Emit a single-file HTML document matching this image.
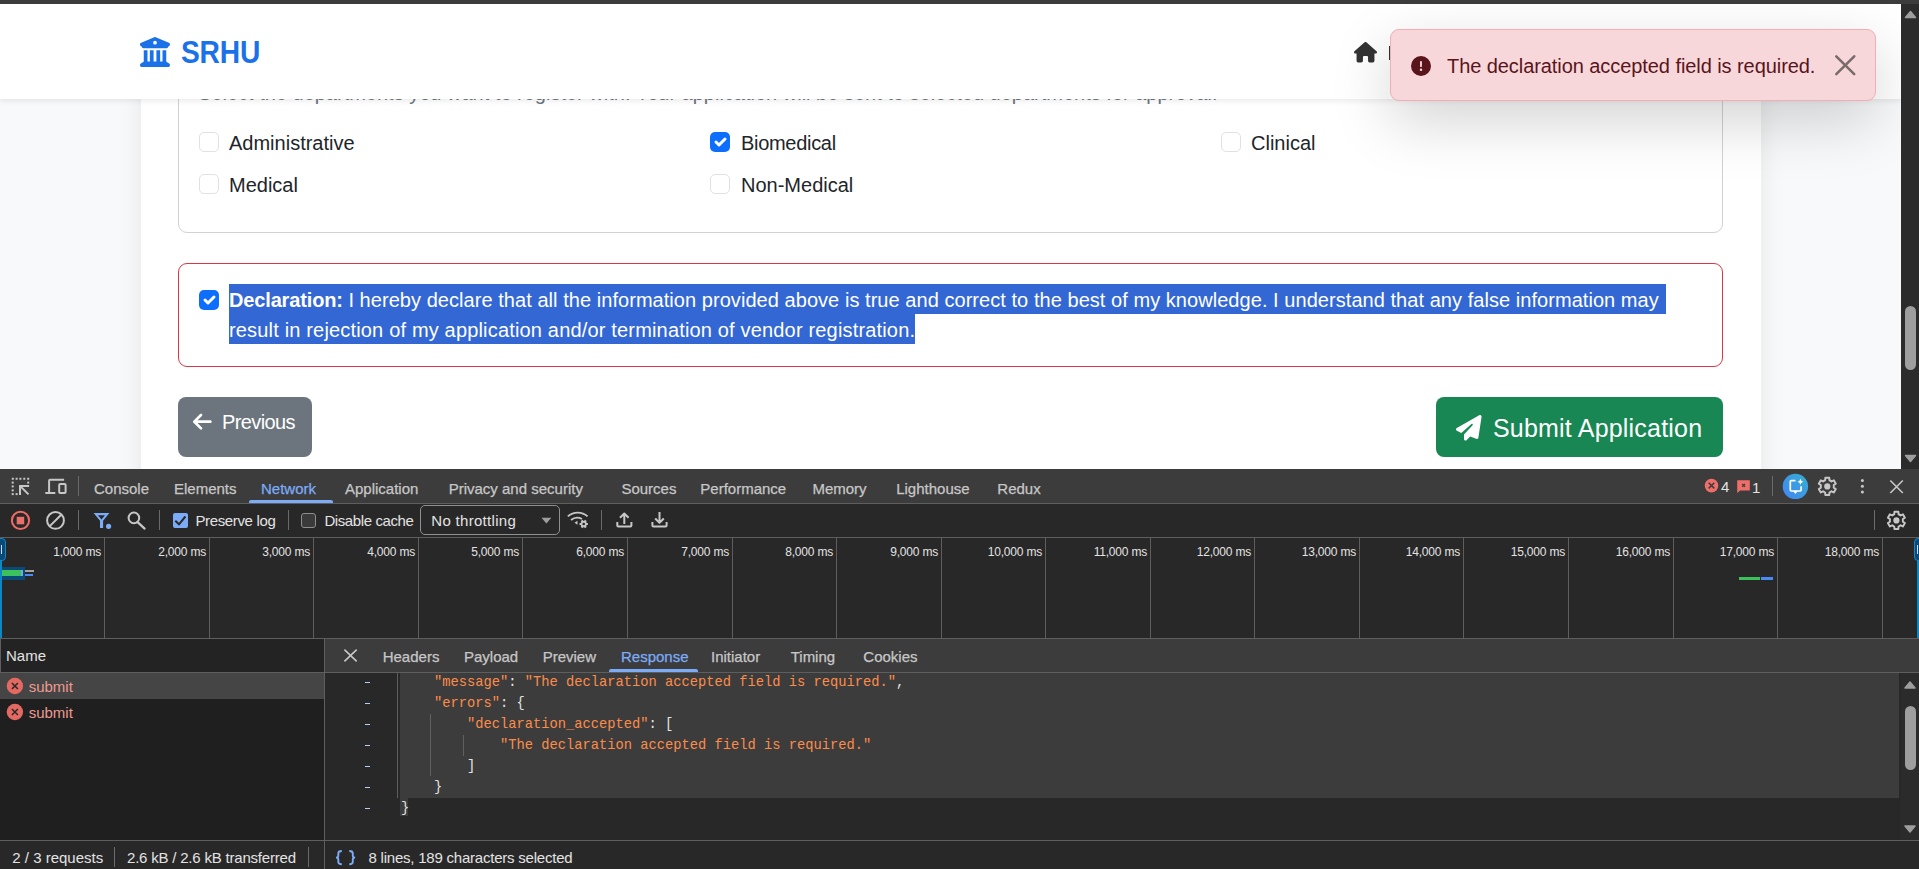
<!DOCTYPE html>
<html><head><meta charset="utf-8">
<style>
*{box-sizing:border-box;margin:0;padding:0}
html,body{width:1919px;height:869px;overflow:hidden;background:#f8f9fa;font-family:"Liberation Sans",sans-serif;position:relative}
.a{position:absolute}
.t{position:absolute;white-space:pre}
svg{position:absolute;overflow:visible}
.box{position:absolute;border:1px solid #d2d2d2;border-radius:9px}
.cb{position:absolute;width:20px;height:20px;border:1px solid #dee2e6;border-radius:5px;background:#fff}
.cbon{position:absolute;width:20px;height:20px;border-radius:5px;background:#0d6efd}
.lbl{position:absolute;white-space:pre;font-size:20px;line-height:20px;color:#212529}
.d{position:absolute;white-space:pre;font-size:15px;line-height:15px;color:#c7c7c7}
.tl{position:absolute;white-space:pre;font-size:12px;line-height:12px;color:#e3e3e3;text-align:right;width:80px}
.gl{position:absolute;top:538px;width:1px;height:100px;background:#5c5c5c}
.code{position:absolute;white-space:pre;font-family:"Liberation Mono",monospace;font-size:13.75px;line-height:13.75px;color:#fc8c4a}
.p{color:#e3e3e3}
.dash{position:absolute;left:365px;width:5px;height:1px;background:#a8c7fa}
</style></head><body>
<!-- ============ PAGE ============ -->
<div class="a" id="page" style="left:0;top:0;width:1901px;height:469px;background:#f8f9fa;overflow:hidden">
  <div class="a" style="left:141px;top:-20px;width:1620px;height:600px;background:#fff;box-shadow:0 10px 24px rgba(0,0,0,.08)"></div>
  <!-- departments box -->
  <div class="box" style="left:178px;top:40px;width:1545px;height:193px"></div>
  <div class="t" style="left:198px;top:83px;font-size:20px;line-height:20px;color:#6c757d">Select the departments you want to register with. Your application will be sent to selected departments for approval.</div>
  <div class="cb" style="left:199px;top:132px"></div>
  <div class="lbl" style="left:229px;top:133px">Administrative</div>
  <div class="cbon" style="left:710px;top:132px"><svg width="20" height="20" viewBox="0 0 20 20" style="left:0;top:0"><path d="M6 10l3 3l6-6" fill="none" stroke="#fff" stroke-width="3" stroke-linecap="round" stroke-linejoin="round"/></svg></div>
  <div class="lbl" style="left:741px;top:133px;letter-spacing:-0.3px">Biomedical</div>
  <div class="cb" style="left:1221px;top:132px"></div>
  <div class="lbl" style="left:1251px;top:133px">Clinical</div>
  <div class="cb" style="left:199px;top:174px"></div>
  <div class="lbl" style="left:229px;top:175px">Medical</div>
  <div class="cb" style="left:710px;top:174px"></div>
  <div class="lbl" style="left:741px;top:175px">Non-Medical</div>
  <!-- declaration -->
  <div class="box" style="left:178px;top:263px;width:1545px;height:104px;border-color:#dc3545"></div>
  <div class="a" style="left:229px;top:284px;width:1437px;height:30px;background:#3367d4"></div>
  <div class="a" style="left:229px;top:314px;width:686px;height:30px;background:#3367d4"></div>
  <div class="cbon" style="left:199px;top:290px"><svg width="20" height="20" viewBox="0 0 20 20" style="left:0;top:0"><path d="M6 10l3 3l6-6" fill="none" stroke="#fff" stroke-width="3" stroke-linecap="round" stroke-linejoin="round"/></svg></div>
  <div class="t" style="left:229px;top:290px;font-size:20px;line-height:20px;color:#fff"><b style="letter-spacing:-0.15px">Declaration:</b><span style="letter-spacing:0.05px"> I hereby declare that all the information provided above is true and correct to the best of my knowledge. I understand that any false information may</span></div>
  <div class="t" style="left:229px;top:320px;font-size:20px;line-height:20px;color:#fff;letter-spacing:0.17px">result in rejection of my application and/or termination of vendor registration.</div>
  <!-- buttons -->
  <div class="a" style="left:178px;top:397px;width:134px;height:60px;background:#6c757d;border-radius:8px"></div>
  <svg width="448" height="512" viewBox="0 0 448 512" style="left:193px;top:411px;width:18.7px;height:21.4px"><path fill="#fff" d="M9.4 233.4c-12.5 12.5-12.5 32.8 0 45.3l160 160c12.5 12.5 32.8 12.5 45.3 0s12.5-32.8 0-45.3L109.2 288 416 288c17.7 0 32-14.3 32-32s-14.3-32-32-32l-306.7 0L214.6 118.6c12.5-12.5 12.5-32.8 0-45.3s-32.8-12.5-45.3 0l-160 160z"/></svg>
  <div class="t" style="left:222px;top:412px;font-size:20px;line-height:20px;color:#fff;letter-spacing:-0.6px">Previous</div>
  <div class="a" style="left:1436px;top:397px;width:287px;height:60px;background:#198754;border-radius:8px"></div>
  <svg width="512" height="512" viewBox="0 0 512 512" style="left:1456px;top:415px;width:25.6px;height:25.6px"><path fill="#fff" d="M498.1 5.6c10.1 7 15.4 19.1 13.5 31.2l-64 416c-1.5 9.7-7.4 18.2-16 23s-18.9 5.4-28 1.6L284 427.7l-68.5 74.1c-8.9 9.7-22.9 12.9-35.2 8.1S160 493.2 160 480V396.4c0-4 1.5-7.8 4.2-10.7L331.8 202.8c5.8-6.3 5.6-16-.4-22s-15.7-6.4-22-.7L106 360.8 17.7 316.6C7.1 311.3 .3 300.7 0 288.9s5.900-22.8 16.1-28.7l448-256c10.7-6.1 23.9-5.5 34 1.4z"/></svg>
  <div class="t" style="left:1493px;top:416px;font-size:25px;line-height:25px;color:#fff;letter-spacing:0.2px">Submit Application</div>
  <!-- navbar -->
  <div class="a" style="left:0;top:0;width:1901px;height:99px;background:#fff;box-shadow:0 2.5px 5px rgba(0,0,0,.075)"></div>
  <svg width="512" height="512" viewBox="0 0 512 512" style="left:140px;top:36.7px;width:30px;height:30px"><path fill="#1b72e8" d="M243.4 2.6l-224 96c-14 6-21.8 21-18.7 35.8S16.8 160 32 160v8c0 13.3 10.7 24 24 24H456c13.3 0 24-10.7 24-24v-8c15.2 0 28.3-10.7 31.3-25.6s-4.8-29.9-18.7-35.8l-224-96c-8-3.4-17.2-3.4-25.2 0zM128 224H64V420.300c-.6 .3-1.2 .7-1.8 1.1l-48 32c-11.7 7.8-17 22.400-12.9 35.900S17.900 512 32 512H480c14.100 0 26.500-9.200 30.600-22.700s-1.100-28.100-12.900-35.900l-48-32c-.6-.4-1.200-.7-1.800-1.100V224H384V416H344V224H280V416H232V224H168V416H128V224zM256 64a32 32 0 1 1 0 64 32 32 0 1 1 0-64z"/></svg>
  <div class="t" style="left:181.3px;top:37.6px;font-size:30.8px;line-height:30.8px;font-weight:bold;color:#1b72e8;letter-spacing:-0.2px;transform:scaleX(0.915);transform-origin:0 0">SRHU</div>
  <svg width="576" height="512" viewBox="0 0 576 512" style="left:1354.3px;top:42.4px;width:23px;height:20.45px"><path fill="#333" d="M575.8 255.5c0 18-15 32.1-32 32.1h-32l.7 160.2c0 2.7-.2 5.4-.5 8.1V472c0 22.1-17.9 40-40 40H456c-1.1 0-2.2 0-3.3-.1c-1.4 .1-2.8 .1-4.2 .1H416 392c-22.1 0-40-17.9-40-40V448 384c0-17.700-14.300-32-32-32H256c-17.700 0-32 14.300-32 32v64 24c0 22.100-17.900 40-40 40H160 128.100c-1.500 0-3-.1-4.500-.2c-1.200 .1-2.400 .2-3.600 .2H104c-22.100 0-40-17.900-40-40V360c0-.9 0-1.900 .1-2.800V287.600H32c-18 0-32-14-32-32.100c0-9 3-17 10-24L266.400 8c7-7 15-8 22-8s15 2 21 7L564.800 231.500c8 7 12 15 11 24z"/></svg>
  <div class="a" style="left:1388.8px;top:46px;width:2px;height:14px;background:#333"></div>
  <!-- toast -->
  <div class="a" style="left:1390px;top:29px;width:486px;height:72px;background:#f8d7da;border:1px solid #f1aeb5;border-radius:9px;box-shadow:0 20px 60px rgba(0,0,0,.175)"></div>
  <svg width="512" height="512" viewBox="0 0 512 512" style="left:1411.3px;top:55.6px;width:20px;height:20px"><path fill="#58151c" d="M256 512A256 256 0 1 0 256 0a256 256 0 1 0 0 512zm0-384c13.3 0 24 10.7 24 24V264c0 13.3-10.7 24-24 24s-24-10.7-24-24V152c0-13.3 10.7-24 24-24zM224 352a32 32 0 1 1 64 0 32 32 0 1 1 -64 0z"/></svg>
  <div class="t" style="left:1447px;top:56px;font-size:20px;line-height:20px;color:#58151c;letter-spacing:-0.07px">The declaration accepted field is required.</div>
  <svg width="16" height="16" viewBox="0 0 16 16" style="left:1835px;top:55px;width:20.5px;height:20.5px"><path fill="#7a6a6c" d="M.293.293a1 1 0 0 1 1.414 0L8 6.586 14.293.293a1 1 0 1 1 1.414 1.414L9.414 8l6.293 6.293a1 1 0 0 1-1.414 1.414L8 9.414l-6.293 6.293a1 1 0 0 1-1.414-1.414L6.586 8 .293 1.707a1 1 0 0 1 0-1.414"/></svg>
</div>
<div class="a" style="left:0;top:0;width:1919px;height:4px;background:#3c3c3c"></div>
<!-- page scrollbar -->
<div class="a" style="left:1901px;top:4px;width:18px;height:465px;background:#2b2b2b"></div>
<svg width="19" height="12" style="left:1901px;top:8px"><path d="M4.5 9.5 L9.5 3.5 L14.5 9.5 Z" fill="#9e9e9e" stroke="#9e9e9e" stroke-width="1.5" stroke-linejoin="round"/></svg>
<svg width="19" height="12" style="left:1901px;top:453px"><path d="M4.5 2.5 L9.5 8.5 L14.5 2.5 Z" fill="#9e9e9e" stroke="#9e9e9e" stroke-width="1.5" stroke-linejoin="round"/></svg>
<div class="a" style="left:1905px;top:306px;width:11px;height:64px;background:#9e9e9e;border-radius:6px"></div>

<!-- ============ DEVTOOLS ============ -->
<div class="a" style="left:0px;top:469px;width:1919px;height:400px;background:#282828;"></div>
<div class="a" style="left:0px;top:469px;width:1919px;height:34px;background:#3c3c3c;"></div>
<div class="a" style="left:0px;top:503px;width:1919px;height:1px;background:#5e5e5e;"></div>
<div class="a" style="left:0px;top:537px;width:1919px;height:1px;background:#5e5e5e;"></div>
<div class="a" style="left:78px;top:476px;width:1px;height:20px;background:#6a6a6a;"></div>
<div class="a" style="left:1772px;top:476px;width:1px;height:20px;background:#6a6a6a;"></div>
<div class="a" style="left:78px;top:510px;width:1px;height:20px;background:#6a6a6a;"></div>
<div class="a" style="left:159px;top:510px;width:1px;height:20px;background:#6a6a6a;"></div>
<div class="a" style="left:288px;top:510px;width:1px;height:20px;background:#6a6a6a;"></div>
<div class="a" style="left:601px;top:510px;width:1px;height:20px;background:#6a6a6a;"></div>
<div class="a" style="left:1874px;top:510px;width:1px;height:20px;background:#6a6a6a;"></div>
<div class="t" style="left:94px;top:481px;font-size:15px;line-height:15px;color:#c7c7c7;-webkit-text-stroke:0.25px #c7c7c7">Console</div>
<div class="t" style="left:174px;top:481px;font-size:15px;line-height:15px;color:#c7c7c7;-webkit-text-stroke:0.25px #c7c7c7">Elements</div>
<div class="t" style="left:261px;top:481px;font-size:15px;line-height:15px;color:#7cacf8;-webkit-text-stroke:0.25px #7cacf8">Network</div>
<div class="t" style="left:345px;top:481px;font-size:15px;line-height:15px;color:#c7c7c7;-webkit-text-stroke:0.25px #c7c7c7">Application</div>
<div class="t" style="left:448.7px;top:481px;font-size:15px;line-height:15px;color:#c7c7c7;-webkit-text-stroke:0.25px #c7c7c7">Privacy and security</div>
<div class="t" style="left:621.4px;top:481px;font-size:15px;line-height:15px;color:#c7c7c7;-webkit-text-stroke:0.25px #c7c7c7">Sources</div>
<div class="t" style="left:700.3px;top:481px;font-size:15px;line-height:15px;color:#c7c7c7;-webkit-text-stroke:0.25px #c7c7c7">Performance</div>
<div class="t" style="left:812.4px;top:481px;font-size:15px;line-height:15px;color:#c7c7c7;-webkit-text-stroke:0.25px #c7c7c7">Memory</div>
<div class="t" style="left:896.2px;top:481px;font-size:15px;line-height:15px;color:#c7c7c7;-webkit-text-stroke:0.25px #c7c7c7">Lighthouse</div>
<div class="t" style="left:997.3px;top:481px;font-size:15px;line-height:15px;color:#c7c7c7;-webkit-text-stroke:0.25px #c7c7c7">Redux</div>
<div class="a" style="left:248.5px;top:500px;width:84px;height:3px;background:#7cacf8;border-radius:2px 2px 0 0"></div>
<div class="t" style="left:1721px;top:479px;font-size:15px;line-height:15px;color:#e3e3e3;">4</div>
<div class="t" style="left:1752px;top:480px;font-size:15px;line-height:15px;color:#e3e3e3;">1</div>
<div class="t" style="left:195.4px;top:513px;font-size:15px;line-height:15px;color:#e3e3e3;letter-spacing:-0.35px">Preserve log</div>
<div class="t" style="left:324.4px;top:513px;font-size:15px;line-height:15px;color:#e3e3e3;letter-spacing:-0.4px">Disable cache</div>
<div class="a" style="left:420px;top:505px;width:140px;height:30px;border:1px solid #8e918f;border-radius:5px"></div>
<div class="t" style="left:431.3px;top:513px;font-size:15px;line-height:15px;color:#e3e3e3;letter-spacing:0.3px">No throttling</div>
<div class="a" style="left:173px;top:513px;width:15px;height:15px;background:#7cacf8;border-radius:2px"></div>
<div class="a" style="left:301px;top:513px;width:15px;height:15px;border:1.5px solid #8e8e8e;border-radius:3px;background:#3a3a3a"></div>
<div class="a" style="left:104px;top:538px;width:1px;height:100px;background:#5e5e5e;"></div>
<div class="t" style="left:1px;top:546px;width:100px;text-align:right;font-size:12px;line-height:12px;color:#e3e3e3;letter-spacing:-0.2px">1,000 ms</div>
<div class="a" style="left:209px;top:538px;width:1px;height:100px;background:#5e5e5e;"></div>
<div class="t" style="left:106px;top:546px;width:100px;text-align:right;font-size:12px;line-height:12px;color:#e3e3e3;letter-spacing:-0.2px">2,000 ms</div>
<div class="a" style="left:313px;top:538px;width:1px;height:100px;background:#5e5e5e;"></div>
<div class="t" style="left:210px;top:546px;width:100px;text-align:right;font-size:12px;line-height:12px;color:#e3e3e3;letter-spacing:-0.2px">3,000 ms</div>
<div class="a" style="left:418px;top:538px;width:1px;height:100px;background:#5e5e5e;"></div>
<div class="t" style="left:315px;top:546px;width:100px;text-align:right;font-size:12px;line-height:12px;color:#e3e3e3;letter-spacing:-0.2px">4,000 ms</div>
<div class="a" style="left:522px;top:538px;width:1px;height:100px;background:#5e5e5e;"></div>
<div class="t" style="left:419px;top:546px;width:100px;text-align:right;font-size:12px;line-height:12px;color:#e3e3e3;letter-spacing:-0.2px">5,000 ms</div>
<div class="a" style="left:627px;top:538px;width:1px;height:100px;background:#5e5e5e;"></div>
<div class="t" style="left:524px;top:546px;width:100px;text-align:right;font-size:12px;line-height:12px;color:#e3e3e3;letter-spacing:-0.2px">6,000 ms</div>
<div class="a" style="left:732px;top:538px;width:1px;height:100px;background:#5e5e5e;"></div>
<div class="t" style="left:629px;top:546px;width:100px;text-align:right;font-size:12px;line-height:12px;color:#e3e3e3;letter-spacing:-0.2px">7,000 ms</div>
<div class="a" style="left:836px;top:538px;width:1px;height:100px;background:#5e5e5e;"></div>
<div class="t" style="left:733px;top:546px;width:100px;text-align:right;font-size:12px;line-height:12px;color:#e3e3e3;letter-spacing:-0.2px">8,000 ms</div>
<div class="a" style="left:941px;top:538px;width:1px;height:100px;background:#5e5e5e;"></div>
<div class="t" style="left:838px;top:546px;width:100px;text-align:right;font-size:12px;line-height:12px;color:#e3e3e3;letter-spacing:-0.2px">9,000 ms</div>
<div class="a" style="left:1045px;top:538px;width:1px;height:100px;background:#5e5e5e;"></div>
<div class="t" style="left:942px;top:546px;width:100px;text-align:right;font-size:12px;line-height:12px;color:#e3e3e3;letter-spacing:-0.2px">10,000 ms</div>
<div class="a" style="left:1150px;top:538px;width:1px;height:100px;background:#5e5e5e;"></div>
<div class="t" style="left:1047px;top:546px;width:100px;text-align:right;font-size:12px;line-height:12px;color:#e3e3e3;letter-spacing:-0.2px">11,000 ms</div>
<div class="a" style="left:1254px;top:538px;width:1px;height:100px;background:#5e5e5e;"></div>
<div class="t" style="left:1151px;top:546px;width:100px;text-align:right;font-size:12px;line-height:12px;color:#e3e3e3;letter-spacing:-0.2px">12,000 ms</div>
<div class="a" style="left:1359px;top:538px;width:1px;height:100px;background:#5e5e5e;"></div>
<div class="t" style="left:1256px;top:546px;width:100px;text-align:right;font-size:12px;line-height:12px;color:#e3e3e3;letter-spacing:-0.2px">13,000 ms</div>
<div class="a" style="left:1463px;top:538px;width:1px;height:100px;background:#5e5e5e;"></div>
<div class="t" style="left:1360px;top:546px;width:100px;text-align:right;font-size:12px;line-height:12px;color:#e3e3e3;letter-spacing:-0.2px">14,000 ms</div>
<div class="a" style="left:1568px;top:538px;width:1px;height:100px;background:#5e5e5e;"></div>
<div class="t" style="left:1465px;top:546px;width:100px;text-align:right;font-size:12px;line-height:12px;color:#e3e3e3;letter-spacing:-0.2px">15,000 ms</div>
<div class="a" style="left:1673px;top:538px;width:1px;height:100px;background:#5e5e5e;"></div>
<div class="t" style="left:1570px;top:546px;width:100px;text-align:right;font-size:12px;line-height:12px;color:#e3e3e3;letter-spacing:-0.2px">16,000 ms</div>
<div class="a" style="left:1777px;top:538px;width:1px;height:100px;background:#5e5e5e;"></div>
<div class="t" style="left:1674px;top:546px;width:100px;text-align:right;font-size:12px;line-height:12px;color:#e3e3e3;letter-spacing:-0.2px">17,000 ms</div>
<div class="a" style="left:1882px;top:538px;width:1px;height:100px;background:#5e5e5e;"></div>
<div class="t" style="left:1779px;top:546px;width:100px;text-align:right;font-size:12px;line-height:12px;color:#e3e3e3;letter-spacing:-0.2px">18,000 ms</div>
<div class="a" style="left:0px;top:638px;width:1919px;height:1px;background:#5e5e5e;"></div>
<div class="a" style="left:0px;top:560px;width:2px;height:78px;background:#0b87c6;"></div>
<div class="a" style="left:-3px;top:538px;width:9px;height:23px;background:#0b4a76;border:1.5px solid #1586c4;border-radius:4px"></div>
<div class="a" style="left:1px;top:545px;width:1px;height:9px;background:#c6dafc;"></div>
<div class="a" style="left:2px;top:567px;width:23px;height:13px;background:#0b4a76;"></div>
<div class="a" style="left:2px;top:570px;width:19px;height:6px;background:#3cc25d;"></div>
<div class="a" style="left:21px;top:570px;width:2px;height:6px;background:#76a6e8;"></div>
<div class="a" style="left:25px;top:570px;width:9px;height:2px;background:#a3a3a3;"></div>
<div class="a" style="left:25px;top:573.5px;width:8px;height:2.5px;background:#4a8af4;"></div>
<div class="a" style="left:1739px;top:577px;width:21px;height:3px;background:#3cc25d;"></div>
<div class="a" style="left:1761px;top:577px;width:12px;height:3px;background:#4a8af4;"></div>
<div class="a" style="left:1914px;top:538px;width:9px;height:23px;background:#0b4a76;border:1.5px solid #1586c4;border-radius:4px"></div>
<div class="a" style="left:1917px;top:560px;width:2px;height:78px;background:#0b87c6;"></div>
<div class="a" style="left:1917px;top:545px;width:1px;height:9px;background:#c6dafc;"></div>
<div class="a" style="left:0px;top:639px;width:324px;height:202px;background:#1f1f1f;"></div>
<div class="a" style="left:0px;top:639px;width:324px;height:33px;background:#232323;"></div>
<div class="a" style="left:0px;top:639px;width:1px;height:33px;background:#5e5e5e;"></div>
<div class="a" style="left:0px;top:672px;width:324px;height:1px;background:#5e5e5e;"></div>
<div class="t" style="left:6px;top:648px;font-size:15px;line-height:15px;color:#e3e3e3;">Name</div>
<div class="a" style="left:0px;top:673px;width:324px;height:26px;background:#454545;"></div>
<div class="t" style="left:28.7px;top:679px;font-size:15px;line-height:15px;color:#ec9a90;">submit</div>
<div class="t" style="left:28.7px;top:705px;font-size:15px;line-height:15px;color:#ec9a90;">submit</div>
<div class="a" style="left:324px;top:639px;width:1px;height:230px;background:#5e5e5e;"></div>
<div class="a" style="left:325px;top:639px;width:1594px;height:33px;background:#3c3c3c;"></div>
<div class="a" style="left:325px;top:672px;width:1594px;height:1px;background:#5e5e5e;"></div>
<div class="t" style="left:382.7px;top:649px;font-size:15px;line-height:15px;color:#c7c7c7;-webkit-text-stroke:0.25px #c7c7c7">Headers</div>
<div class="t" style="left:464px;top:649px;font-size:15px;line-height:15px;color:#c7c7c7;-webkit-text-stroke:0.25px #c7c7c7">Payload</div>
<div class="t" style="left:542.7px;top:649px;font-size:15px;line-height:15px;color:#c7c7c7;-webkit-text-stroke:0.25px #c7c7c7">Preview</div>
<div class="t" style="left:621px;top:649px;font-size:15px;line-height:15px;color:#7cacf8;-webkit-text-stroke:0.25px #7cacf8">Response</div>
<div class="t" style="left:711px;top:649px;font-size:15px;line-height:15px;color:#c7c7c7;-webkit-text-stroke:0.25px #c7c7c7">Initiator</div>
<div class="t" style="left:790.7px;top:649px;font-size:15px;line-height:15px;color:#c7c7c7;-webkit-text-stroke:0.25px #c7c7c7">Timing</div>
<div class="t" style="left:863.3px;top:649px;font-size:15px;line-height:15px;color:#c7c7c7;-webkit-text-stroke:0.25px #c7c7c7">Cookies</div>
<div class="a" style="left:608.7px;top:669px;width:89.6px;height:3px;background:#7cacf8;border-radius:2px 2px 0 0"></div>
<div class="a" style="left:325px;top:673px;width:1576px;height:168px;background:#282828;"></div>
<div class="a" style="left:397px;top:673px;width:1px;height:125px;background:#5e5e5e;"></div>
<div class="a" style="left:400px;top:673px;width:1499px;height:125px;background:#3c3c3c;"></div>
<div class="a" style="left:400px;top:798px;width:8px;height:18px;background:#3c3c3c;"></div>
<div class="a" style="left:430px;top:714px;width:1px;height:62px;background:#606060;"></div>
<div class="a" style="left:463px;top:735px;width:1px;height:21px;background:#606060;"></div>
<div class="a" style="left:365px;top:682px;width:5px;height:1px;background:#b4cff8;"></div>
<div class="a" style="left:365px;top:703px;width:5px;height:1px;background:#b4cff8;"></div>
<div class="a" style="left:365px;top:724px;width:5px;height:1px;background:#b4cff8;"></div>
<div class="a" style="left:365px;top:745px;width:5px;height:1px;background:#b4cff8;"></div>
<div class="a" style="left:365px;top:766px;width:5px;height:1px;background:#b4cff8;"></div>
<div class="a" style="left:365px;top:787px;width:5px;height:1px;background:#b4cff8;"></div>
<div class="a" style="left:365px;top:808px;width:5px;height:1px;background:#b4cff8;"></div>
<div class="code" style="left:434.0px;top:676px"><span>"message"</span><span class="p">: </span><span>"The declaration accepted field is required."</span><span class="p">,</span></div>
<div class="code" style="left:434.0px;top:697px"><span>"errors"</span><span class="p">: {</span></div>
<div class="code" style="left:467.0px;top:718px"><span>"declaration_accepted"</span><span class="p">: [</span></div>
<div class="code" style="left:500.0px;top:739px"><span>"The declaration accepted field is required."</span></div>
<div class="code" style="left:467.0px;top:760px"><span class="p">]</span></div>
<div class="code" style="left:434.0px;top:781px"><span class="p">}</span></div>
<div class="code" style="left:401.0px;top:802px"><span class="p">}</span></div>
<div class="a" style="left:1901px;top:673px;width:18px;height:168px;background:#2b2b2b;"></div>
<svg width="19" height="12" style="left:1900px;top:678px"><path d="M5 10 L10 4 L15 10 Z" fill="#9e9e9e" stroke="#9e9e9e" stroke-width="1.5" stroke-linejoin="round"/></svg>
<svg width="19" height="12" style="left:1900px;top:824px"><path d="M5 2 L10 8 L15 2 Z" fill="#9e9e9e" stroke="#9e9e9e" stroke-width="1.5" stroke-linejoin="round"/></svg>
<div class="a" style="left:1905px;top:706px;width:11px;height:64px;background:#9e9e9e;border-radius:6px"></div>
<div class="a" style="left:0px;top:840px;width:1919px;height:1px;background:#5e5e5e;"></div>
<div class="a" style="left:0px;top:841px;width:1919px;height:28px;background:#282828;"></div>
<div class="a" style="left:324px;top:841px;width:1px;height:28px;background:#5e5e5e;"></div>
<div class="a" style="left:114px;top:847px;width:1px;height:20px;background:#6a6a6a;"></div>
<div class="a" style="left:308px;top:847px;width:1px;height:20px;background:#6a6a6a;"></div>
<div class="t" style="left:12.3px;top:850px;font-size:15px;line-height:15px;color:#e3e3e3;">2 / 3 requests</div>
<div class="t" style="left:127px;top:850px;font-size:15px;line-height:15px;color:#e3e3e3;letter-spacing:-0.2px">2.6 kB / 2.6 kB transferred</div>
<div class="t" style="left:368.5px;top:850px;font-size:15px;line-height:15px;color:#e3e3e3;letter-spacing:-0.22px">8 lines, 189 characters selected</div>
<svg width="1919" height="869" style="left:0;top:0"><rect x="11.8" y="477.75" width="2" height="2" fill="#c7c7c7"/><rect x="15.600000000000001" y="477.75" width="2" height="2" fill="#c7c7c7"/><rect x="19.4" y="477.75" width="2" height="2" fill="#c7c7c7"/><rect x="23.3" y="477.75" width="2" height="2" fill="#c7c7c7"/><rect x="27.2" y="477.75" width="2" height="2" fill="#c7c7c7"/><rect x="11.7" y="481.6" width="2" height="2" fill="#c7c7c7"/><rect x="11.7" y="485.4" width="2" height="2" fill="#c7c7c7"/><rect x="11.7" y="489.4" width="2" height="2" fill="#c7c7c7"/><rect x="11.7" y="493.1" width="2" height="2" fill="#c7c7c7"/><rect x="27.2" y="481.6" width="2" height="2" fill="#c7c7c7"/><rect x="15.6" y="493.1" width="2" height="2" fill="#c7c7c7"/><path d="M19.2 485.9 H29.1 M20 485.3 V495 M20.5 486.4 L28.5 494.4" stroke="#c7c7c7" stroke-width="2" fill="none"/><path d="M64.1 479.8 H50 Q49.1 479.8 49.1 480.7 V493 M45.3 493 H55.3" stroke="#c7c7c7" stroke-width="2" fill="none"/><rect x="59.2" y="483.9" width="6.4" height="9.2" rx="1" stroke="#c7c7c7" stroke-width="2" fill="none"/><circle cx="20.5" cy="520.4" r="8.6" stroke="#ee6b66" stroke-width="2" fill="none"/><rect x="16.7" y="516.8" width="7.5" height="7.5" fill="#e8716a"/><circle cx="55.5" cy="520.4" r="8.4" stroke="#c7c7c7" stroke-width="2" fill="none"/><path d="M61.2 514.7 L49.8 526.1" stroke="#c7c7c7" stroke-width="2"/><path fill="#7cacf8" fill-rule="evenodd" d="M93.6 512.9 H109.4 L103.1 520.8 V527.9 H100 V520.8 Z M97.9 515.2 H105.0 L101.45 519.6 Z"/><circle cx="108.6" cy="526.3" r="2.6" fill="#7cacf8"/><circle cx="133.9" cy="517.9" r="5.3" stroke="#c7c7c7" stroke-width="2" fill="none"/><path d="M137.6 522.1 L144.6 528.6" stroke="#c7c7c7" stroke-width="2.2" stroke-linecap="round"/><path d="M175.3 520.8 L179 524.3 L185.4 516.5" stroke="#282828" stroke-width="2" fill="none"/><path d="M541.5 517.8 H551.3 L546.4 523.4 Z" fill="#9e9e9e"/><path d="M567.8 516.4 A15 15 0 0 1 587.6 516.4" stroke="#c7c7c7" stroke-width="1.8" fill="none"/><path d="M571 520 A10 10 0 0 1 582 519" stroke="#c7c7c7" stroke-width="1.8" fill="none"/><path d="M574.5 522.8 L577.5 520.8 L577.5 524.8 Z" fill="#c7c7c7"/><path d="M586.71 522.91 L587.87 522.96 L587.87 525.04 L586.71 525.09 A3.2 3.2 0 0 1 586.15 526.06 L586.15 526.06 L586.69 527.09 L584.89 528.13 L584.26 527.15 A3.2 3.2 0 0 1 583.14 527.15 L583.14 527.15 L582.51 528.13 L580.71 527.09 L581.25 526.06 A3.2 3.2 0 0 1 580.69 525.09 L580.69 525.09 L579.53 525.04 L579.53 522.96 L580.69 522.91 A3.2 3.2 0 0 1 581.25 521.94 L581.25 521.94 L580.71 520.91 L582.51 519.87 L583.14 520.85 A3.2 3.2 0 0 1 584.26 520.85 L584.26 520.85 L584.89 519.87 L586.69 520.91 L586.15 521.94 A3.2 3.2 0 0 1 586.71 522.91 Z" fill="#c7c7c7"/><circle cx="583.7" cy="524" r="1.3" fill="#282828"/><path d="M624.3 524 V513.5 M620 517.8 L624.3 513.5 L628.6 517.8 M617.3 522 V525.6 Q617.3 526.6 618.3 526.6 H630.4 Q631.4 526.6 631.4 525.6 V522" stroke="#c7c7c7" stroke-width="2" fill="none" stroke-linejoin="round"/><path d="M659.5 512 V522.8 M655.2 518.5 L659.5 522.8 L663.8 518.5 M652.4 522 V525.6 Q652.4 526.6 653.4 526.6 H665.6 Q666.6 526.6 666.6 525.6 V522" stroke="#c7c7c7" stroke-width="2" fill="none" stroke-linejoin="round"/><circle cx="1711.5" cy="485.6" r="6.8" fill="#ee6e6a"/><path d="M1708.7 482.8 L1714.3 488.4 M1714.3 482.8 L1708.7 488.4" stroke="#3c3c3c" stroke-width="1.5"/><path d="M1737.2 480.2 H1749.8 V490.6 H1740.2 L1737.2 493 Z" fill="#ee6e6a"/><path d="M1742.2 483.9 L1745 486.7 M1745 483.9 L1742.2 486.7" stroke="#3c3c3c" stroke-width="1.3"/><defs><linearGradient id="ai" x1="0" y1="1" x2="1" y2="0"><stop offset="0" stop-color="#4285f4"/><stop offset="1" stop-color="#35b0d2"/></linearGradient></defs><circle cx="1795.4" cy="486.4" r="12.7" fill="url(#ai)"/><path d="M1795.5 480.6 H1791.2 Q1790.3 480.6 1790.3 481.5 V490.1 Q1790.3 491 1791.2 491 H1800.2 Q1801.1 491 1801.1 490.1 V486.3" stroke="#fff" stroke-width="1.7" fill="none"/><path d="M1793 491 L1795.4 494 L1797.8 491 Z" fill="#fff"/><path d="M1800.4 478.8 Q1800.9 481.3 1803.4 481.8 Q1800.9 482.3 1800.4 484.8 Q1799.9 482.3 1797.4 481.8 Q1799.9 481.3 1800.4 478.8 Z" fill="#fff"/><path d="M1825.18 480.25 L1825.30 477.73 L1829.30 477.73 L1829.42 480.25 A6.5 6.5 0 0 1 1831.56 481.49 L1831.56 481.49 L1833.81 480.33 L1835.81 483.80 L1833.68 485.16 A6.5 6.5 0 0 1 1833.68 487.64 L1833.68 487.64 L1835.81 489.00 L1833.81 492.47 L1831.56 491.31 A6.5 6.5 0 0 1 1829.42 492.55 L1829.42 492.55 L1829.30 495.07 L1825.30 495.07 L1825.18 492.55 A6.5 6.5 0 0 1 1823.04 491.31 L1823.04 491.31 L1820.79 492.47 L1818.79 489.00 L1820.92 487.64 A6.5 6.5 0 0 1 1820.92 485.16 L1820.92 485.16 L1818.79 483.80 L1820.79 480.33 L1823.04 481.49 A6.5 6.5 0 0 1 1825.18 480.25 Z" stroke="#c7c7c7" stroke-width="1.9" fill="none" stroke-linejoin="round"/><circle cx="1827.3" cy="486.4" r="3.1" fill="#c7c7c7"/><path d="M1894.28 514.25 L1894.40 511.73 L1898.40 511.73 L1898.52 514.25 A6.5 6.5 0 0 1 1900.66 515.49 L1900.66 515.49 L1902.91 514.33 L1904.91 517.80 L1902.78 519.16 A6.5 6.5 0 0 1 1902.78 521.64 L1902.78 521.64 L1904.91 523.00 L1902.91 526.47 L1900.66 525.31 A6.5 6.5 0 0 1 1898.52 526.55 L1898.52 526.55 L1898.40 529.07 L1894.40 529.07 L1894.28 526.55 A6.5 6.5 0 0 1 1892.14 525.31 L1892.14 525.31 L1889.89 526.47 L1887.89 523.00 L1890.02 521.64 A6.5 6.5 0 0 1 1890.02 519.16 L1890.02 519.16 L1887.89 517.80 L1889.89 514.33 L1892.14 515.49 A6.5 6.5 0 0 1 1894.28 514.25 Z" stroke="#c7c7c7" stroke-width="1.9" fill="none" stroke-linejoin="round"/><circle cx="1896.4" cy="520.4" r="3.1" fill="#c7c7c7"/><circle cx="1862.4" cy="480.6" r="1.5" fill="#c7c7c7"/><circle cx="1862.4" cy="486.3" r="1.5" fill="#c7c7c7"/><circle cx="1862.4" cy="492" r="1.5" fill="#c7c7c7"/><path d="M1890.3 480.5 L1902.8 493 M1902.8 480.5 L1890.3 493" stroke="#c7c7c7" stroke-width="1.6"/><circle cx="14.9" cy="686" r="8.2" fill="#e46962"/><path d="M11.9 683 L17.9 689 M17.9 683 L11.9 689" stroke="#2a2a2a" stroke-width="1.6"/><circle cx="14.9" cy="712" r="8.2" fill="#e46962"/><path d="M11.9 709 L17.9 715 M17.9 709 L11.9 715" stroke="#2a2a2a" stroke-width="1.6"/><path d="M344.4 649.7 L356.7 661.4 M356.7 649.7 L344.4 661.4" stroke="#c7c7c7" stroke-width="1.6"/><path d="M341.8 851 Q338.3 851 338.3 853.5 V855.8 Q338.3 857.6 336 857.6 Q338.3 857.6 338.3 859.4 V861.7 Q338.3 864.2 341.8 864.2 M349.3 851 Q352.8 851 352.8 853.5 V855.8 Q352.8 857.6 355.1 857.6 Q352.8 857.6 352.8 859.4 V861.7 Q352.8 864.2 349.3 864.2" stroke="#7cacf8" stroke-width="1.9" fill="none"/></svg>
</body></html>
